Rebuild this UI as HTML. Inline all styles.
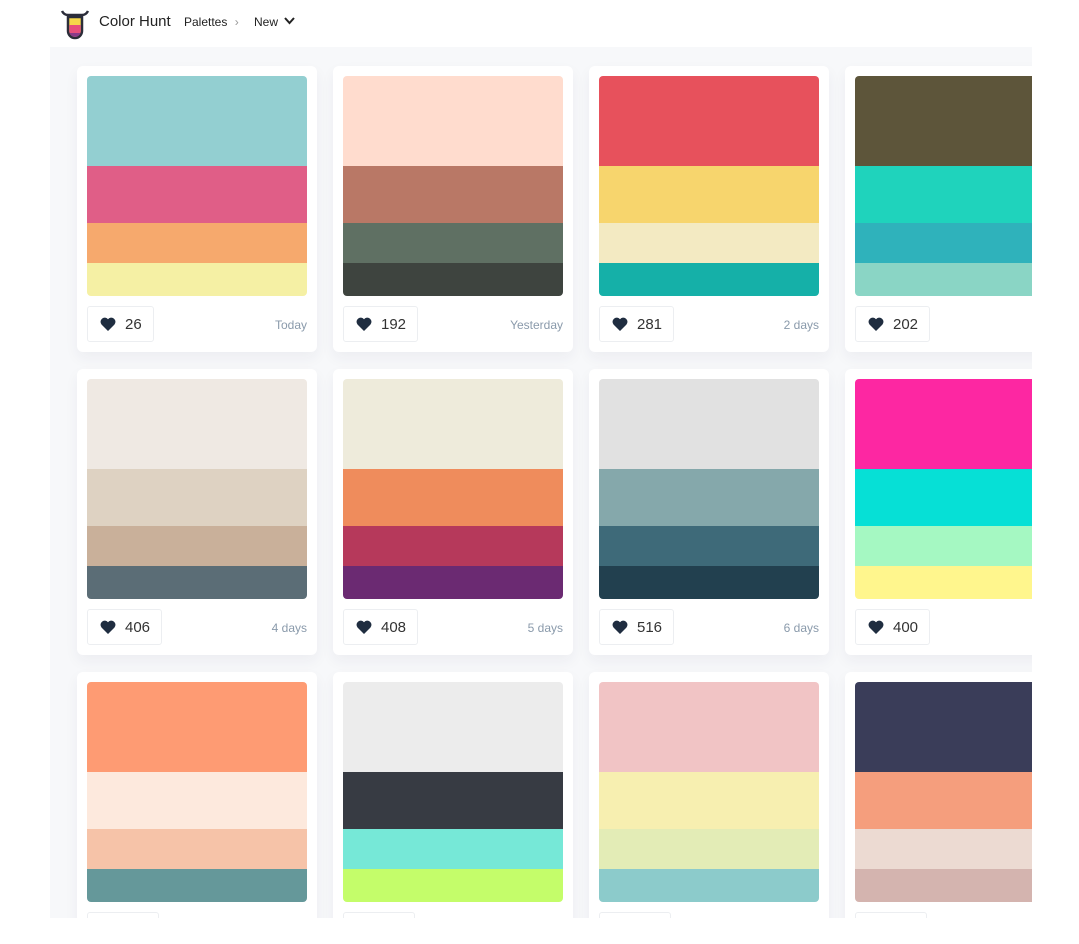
<!DOCTYPE html><html><head><style>
body{margin:0;width:1079px;height:944px;background:#fff;font-family:"Liberation Sans",sans-serif;position:relative;overflow:hidden}
.hdr{position:absolute;left:0;top:0;width:1079px;height:47px}
.main{position:absolute;left:50px;top:47px;width:982px;height:871px;background:#f7f8fa;overflow:hidden}
.card{position:absolute;width:240px;height:286px;background:#fff;border-radius:6px;box-shadow:0 6px 14px rgba(30,40,70,.05)}
.pal{position:absolute;left:10px;top:10px;width:220px;height:220px;border-radius:4px;overflow:hidden}
.pal div{width:100%}
.like{position:absolute;left:10px;top:240px;height:36px;border:1px solid #eceef1;border-radius:3px;box-sizing:border-box;padding:0 11px 0 12px;display:flex;align-items:center;font-size:15px;color:#333}
.like svg{margin-right:9px}
.date{position:absolute;right:10px;top:252px;font-size:12px;color:#8a9aab}
</style></head><body>
<div class="hdr">
<svg style="position:absolute;left:60px;top:8px" width="30" height="32" viewBox="0 0 30 32"><path d="M2 3 Q4 7 8 7 L22 7 Q26 7 28 3" stroke="#2b2d3a" stroke-width="2.5" fill="none"/><path d="M8 9 H22 V23 A7 7 0 0 1 8 23 Z" fill="#f6d84a" stroke="#2b2d3a" stroke-width="2.5"/><path d="M9.3 17 H20.7 V23 A5.7 5.7 0 0 1 9.3 23Z" fill="#e74f7c"/><path d="M9.6 25 H20.4 A5.7 5.7 0 0 1 9.6 25Z" fill="#8a3a8a"/></svg>
<div style="position:absolute;left:99px;top:13px;font-size:15px;color:#222">Color Hunt</div>
<div style="position:absolute;left:184px;top:15px;font-size:12px;color:#222">Palettes <span style="color:#999;margin:0 4px">›</span></div>
<div style="position:absolute;left:254px;top:15px;font-size:12px;color:#222">New</div>
<svg style="position:absolute;left:283px;top:16px" width="13" height="10" viewBox="0 0 13 10"><path d="M2 2 L6.5 7 L11 2" stroke="#222" stroke-width="2" fill="none"/></svg>
</div>
<div class="main" id="m"></div>
<script>
var data=[
[["#93cfd1","#e05e87","#f6a96d","#f5f0a4"],"26","Today"],
[["#ffdcce","#b97866","#5f7063","#3e443f"],"192","Yesterday"],
[["#e7515c","#f7d56d","#f3eac2","#15b0a8"],"281","2 days"],
[["#5d553a","#1fd3bc","#2fb2bb","#8ad5c5"],"202",""],
[["#efe9e3","#ded2c2","#c9b09a","#5b6d76"],"406","4 days"],
[["#eeebdb","#ef8c5c","#b6395b","#6b2a72"],"408","5 days"],
[["#e1e1e1","#85a8ab","#3e6a79","#22404f"],"516","6 days"],
[["#fd27a2","#06e0d6","#a5f8c2","#fff68d"],"400",""],
[["#fe9b73","#fde9dd","#f6c3a8","#65989a"],"",""],
[["#ececec","#373b43","#76e8d7","#c4fd6a"],"",""],
[["#f1c4c5","#f7efb0","#e3ecb6","#8ccbcb"],"",""],
[["#3a3d59","#f59e7d","#ecdad2","#d4b4af"],"",""]];
var h=[90,57,40,33],out="";
data.forEach(function(d,i){var c=i%4,r=Math.floor(i/4);
var s='<div class="card" style="left:'+(27+c*256)+'px;top:'+(19+r*303)+'px"><div class="pal">';
d[0].forEach(function(col,j){s+='<div style="height:'+h[j]+'px;background:'+col+'"></div>'});
s+='</div><div class="like"'+(d[1]?'':' style="width:72px"')+'>'+(d[1]?'<svg width="16" height="14" viewBox="0 0 16 14"><path d="M8 14 L1.5 7.5 A3.9 3.9 0 0 1 8 2.2 A3.9 3.9 0 0 1 14.5 7.5 Z" fill="#1f2d40"/></svg>'+d[1]:'')+'</div><div class="date">'+d[2]+'</div></div>';
out+=s});
document.getElementById('m').innerHTML=out;
</script>
</body></html>
